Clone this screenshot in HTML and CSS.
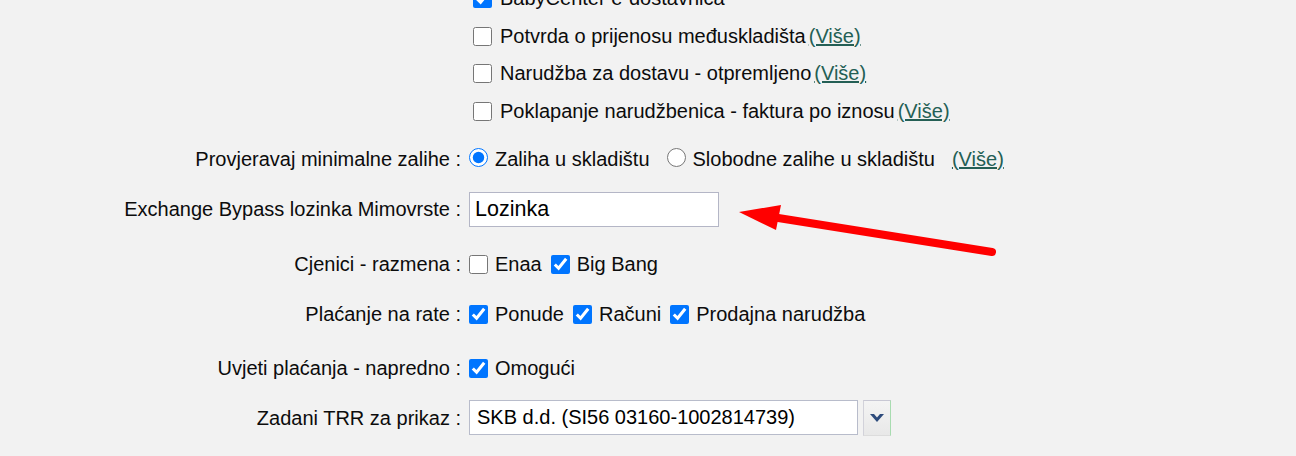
FILE: index.html
```html
<!DOCTYPE html>
<html lang="hr">
<head>
<meta charset="utf-8">
<title>Postavke</title>
<link rel="stylesheet" href="styles.css">
</head>
<body>
<div class="page">
  <div class="form">
    <div class="row row-list">
      <div class="label"></div>
      <div class="field">
        <ul class="checklist">
          <li><input type="checkbox" checked><span>BabyCenter e-dostavnica</span></li>
          <li><input type="checkbox"><span>Potvrda o prijenosu međuskladišta</span><a class="more" href="#">(Više)</a></li>
          <li><input type="checkbox"><span>Narudžba za dostavu - otpremljeno</span><a class="more" href="#">(Više)</a></li>
          <li><input type="checkbox"><span>Poklapanje narudžbenica - faktura po iznosu</span><a class="more" href="#">(Više)</a></li>
        </ul>
      </div>
    </div>

    <div class="row row-first">
      <div class="label">Provjeravaj minimalne zalihe :</div>
      <div class="field opts">
        <label class="opt"><input type="radio" name="zal" checked><span>Zaliha u skladištu</span></label>
        <label class="opt opt-wide"><input type="radio" name="zal"><span>Slobodne zalihe u skladištu</span></label>
        <a class="more more-far" href="#">(Više)</a>
      </div>
    </div>

    <div class="row">
      <div class="label">Exchange Bypass lozinka Mimovrste :</div>
      <div class="field"><input class="text" type="text" value="Lozinka"></div>
    </div>

    <div class="row row-push5">
      <div class="label">Cjenici - razmena :</div>
      <div class="field opts">
        <label class="opt"><input type="checkbox"><span>Enaa</span></label>
        <label class="opt"><input type="checkbox" checked><span>Big Bang</span></label>
      </div>
    </div>

    <div class="row">
      <div class="label">Plaćanje na rate :</div>
      <div class="field opts">
        <label class="opt"><input type="checkbox" checked><span>Ponude</span></label>
        <label class="opt"><input type="checkbox" checked><span>Računi</span></label>
        <label class="opt"><input type="checkbox" checked><span>Prodajna narudžba</span></label>
      </div>
    </div>

    <div class="row row-push3">
      <div class="label">Uvjeti plaćanja - napredno :</div>
      <div class="field opts">
        <label class="opt"><input type="checkbox" checked><span>Omogući</span></label>
      </div>
    </div>

    <div class="row">
      <div class="label">Zadani TRR za prikaz :</div>
      <div class="field">
        <div class="select">
          <div class="select-box">SKB d.d. (SI56 03160-1002814739)</div>
          <div class="select-btn">
            <svg width="14" height="8" viewBox="0 0 14 8"><path d="M0 0 L4 0 L7 3.5 L10 0 L14 0 L7 8 Z" fill="#2d4b7c"/></svg>
          </div>
        </div>
      </div>
    </div>
  </div>

  <svg class="arrow" width="1296" height="456" viewBox="0 0 1296 456">
    <line x1="992" y1="252" x2="772" y2="217" stroke="#ff0000" stroke-width="8" stroke-linecap="round"/>
    <polygon points="739,212 781,205 776,230" fill="#ff0000"/>
  </svg>
</div>
</body>
</html>
```

FILE: styles.css
```css
html, body {
  margin: 0;
  padding: 0;
  background: #f2f2f2;
}

body {
  width: 1296px;
  height: 456px;
  overflow: hidden;
  font-family: "Liberation Sans", Arial, sans-serif;
  font-size: 20px;
  color: #0c0c0c;
}

.page {
  position: relative;
  display: flow-root;
  width: 1296px;
  height: 456px;
}

.form {
  display: flex;
  flex-direction: column;
  margin-top: -20px;
}

.row {
  display: grid;
  grid-template-columns: 461px 1fr;
  column-gap: 8px;
  align-items: center;
  height: 50px;
}

.row-list {
  height: auto;
  align-items: start;
}

.row-first {
  margin-top: 4px;
}

.row-push5 {
  margin-top: 5px;
}

.row-push3 {
  margin-top: 4px;
}

.label {
  text-align: right;
  white-space: nowrap;
}

.field {
  display: flex;
  align-items: center;
  white-space: nowrap;
}

input[type="checkbox"],
input[type="radio"] {
  width: 19px;
  height: 19px;
  margin: 0;
  flex: none;
}

.checklist {
  list-style: none;
  margin: 0;
  padding: 0 0 0 4px;
}

.checklist li {
  height: 37.5px;
  display: flex;
  align-items: center;
}

.checklist li input {
  margin: 0 8px 0 0;
}

.more {
  color: #245f55;
  text-decoration: underline;
  margin-left: 3px;
}

.opts {
  gap: 9px;
}

.opts .more-far {
  margin-left: 8px;
}

.opt {
  display: flex;
  align-items: center;
  gap: 7px;
}

.opt-wide {
  margin-left: 8px;
}

.opt input[type="radio"] {
  position: relative;
  top: -2px;
}

.text {
  box-sizing: border-box;
  width: 250px;
  height: 35px;
  border: 1px solid #b4b6c6;
  background: #fff;
  font-family: "Liberation Sans", Arial, sans-serif;
  font-size: 21.5px;
  color: #000;
  padding: 0 5px;
  margin: 0;
  outline: none;
}

.select {
  display: flex;
  gap: 5px;
  align-items: stretch;
}

.select-box {
  box-sizing: border-box;
  width: 389px;
  height: 35px;
  border: 1px solid #b8bccb;
  background: #fff;
  font-size: 20px;
  color: #000;
  padding: 0 7px;
  display: flex;
  align-items: center;
}

.select-btn {
  box-sizing: border-box;
  width: 28px;
  height: 36px;
  background: linear-gradient(#f4f4f4, #e8e8e8);
  border-top: 1px solid #c8c8d4;
  border-left: 1px solid #d2d2da;
  border-right: 1px solid #a8dcb0;
  border-bottom: 1px solid #dcdcdc;
  display: flex;
  align-items: center;
  justify-content: center;
}

.arrow {
  position: absolute;
  left: 0;
  top: 0;
  pointer-events: none;
}
```
